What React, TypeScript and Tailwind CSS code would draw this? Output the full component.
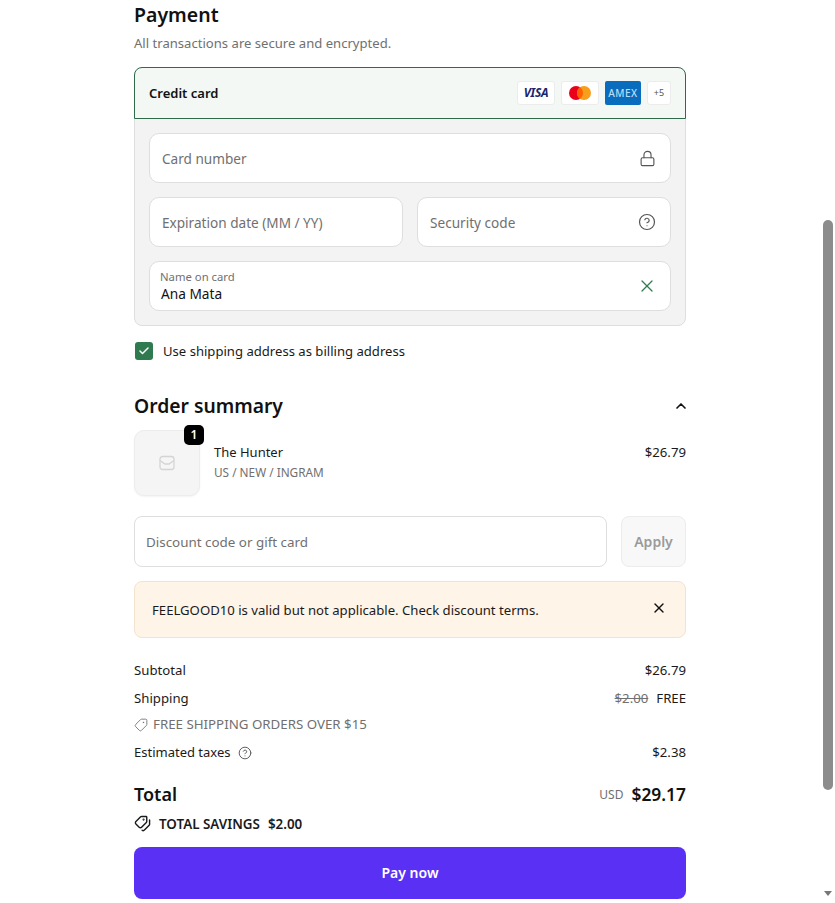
import { ChevronUp, CircleHelp, Lock, Tag, Tags, X, Check } from "lucide-react";

const font = { fontFamily: '"Noto Sans", "Open Sans", sans-serif' };

const Field = ({ label, icon, className = "" }: { label: string; icon?: React.ReactNode; className?: string }) => (
  <div className={`flex h-[50px] items-center justify-between rounded-[10px] border border-[#dedede] bg-white pr-[14px] pl-3 ${className}`}>
    <span className="pt-[2px] text-[13.6px] text-[#707070]">{label}</span>
    {icon}
  </div>
);

const CardBadge = ({ children, className = "" }: { children: React.ReactNode; className?: string }) => (
  <div className={`flex h-6 items-center justify-center rounded-[3px] border border-[#ececec] bg-white ${className}`}>
    {children}
  </div>
);

const Row = ({ left, right, className = "" }: { left: React.ReactNode; right: React.ReactNode; className?: string }) => (
  <div className={`flex items-center justify-between text-[13.2px] text-[#1a1a1a] ${className}`}>
    <div className="flex items-center">{left}</div>
    <div className="flex items-center">{right}</div>
  </div>
);

export default function App() {
  return (
    <div className="flex h-[903px] w-[835px] overflow-hidden bg-white" style={font}>
      <main className="w-[818px] shrink-0 pl-[134px]">
        <div className="w-[552px] pt-px">
          <h2 className="h-7 text-[19.5px] leading-7 font-semibold text-[#111]">Payment</h2>
          <p className="mt-[4px] h-5 text-[13.1px] leading-5 text-[#707070]">All transactions are secure and encrypted.</p>

          <div className="mt-[14px] rounded-[8px] border border-[#dedede] bg-[#f3f3f3]">
            <div className="-m-px flex h-[52px] items-center justify-between rounded-t-[8px] border border-[#2f6b4a] bg-[#f3f8f4] pr-[14px] pl-[14px]">
              <span className="pt-[2px] text-[13px] font-semibold text-[#111]">Credit card</span>
              <div className="flex items-center gap-[6px]">
                <CardBadge className="w-[38px]">
                  <span className="text-xs font-bold tracking-tight text-[#1a2470] italic">VISA</span>
                </CardBadge>
                <CardBadge className="w-[38px]">
                  <svg width="24" height="16" viewBox="0 0 24 16">
                    <circle cx="8" cy="8" r="7" fill="#eb001b" />
                    <circle cx="16" cy="8" r="7" fill="#f79e1b" />
                    <path d="M12 2.3a7 7 0 0 1 0 11.4a7 7 0 0 1 0-11.4z" fill="#ff5f00" />
                  </svg>
                </CardBadge>
                <div className="flex h-6 w-9 items-center justify-center rounded-[2px] bg-[#0a6cbd]">
                  <span className="text-[10px] leading-none font-medium tracking-[0.5px] text-[#bcdcf5]">AMEX</span>
                </div>
                <CardBadge className="w-6">
                  <span className="text-[9px] text-[#555]">+5</span>
                </CardBadge>
              </div>
            </div>

            <div className="flex flex-col gap-[14px] px-[14px] pt-[15px] pb-[14px]">
              <Field label="Card number" icon={<Lock size={17} strokeWidth={1.6} className="text-[#555]" />} />
              <div className="flex gap-[14px]">
                <Field label="Expiration date (MM / YY)" className="flex-1" />
                <Field label="Security code" className="flex-1" icon={<CircleHelp size={18} strokeWidth={1.6} className="text-[#555]" />} />
              </div>
              <div className="flex h-[50px] items-center justify-between rounded-[10px] border border-[#dedede] bg-white pr-[13px] pl-[10px]">
                <div className="flex flex-col pt-px">
                  <span className="text-[11.3px] leading-[15px] text-[#707070]">Name on card</span>
                  <span className="pl-px text-[13.7px] leading-[20px] text-[#111]">Ana Mata</span>
                </div>
                <X size={20} strokeWidth={1.5} className="text-[#2f7a4f]" />
              </div>
            </div>
          </div>

          <label className="mt-[14px] flex items-center">
            <span className="ml-px flex h-[18px] w-[18px] items-center justify-center rounded-[3px] bg-[#2f7a4f]">
              <Check size={12} strokeWidth={3} className="text-white" />
            </span>
            <span className="ml-[10px] pt-[2px] text-[13.1px] text-[#1a1a1a]">Use shipping address as billing address</span>
          </label>

          <div className="mt-[30px] flex h-7 items-center justify-between">
            <h2 className="text-[19.3px] leading-7 font-semibold text-[#111]">Order summary</h2>
            <ChevronUp size={16} strokeWidth={2.5} className="mr-[-3px] text-[#111]" />
          </div>

          <div className="mt-[10px] flex items-start">
            <div className="relative flex h-[66px] w-[66px] shrink-0 items-center justify-center rounded-[10px] border border-[#ededed] bg-[#f5f5f5] shadow-xs">
              <svg width="18" height="18" viewBox="0 0 18 18" fill="none" stroke="#d4d4d4" strokeWidth="1.3">
                <rect x="2" y="2.5" width="14" height="13" rx="2.5" />
                <path d="M2 6.5l5 3.5h4l5-3.5" />
              </svg>
              <span className="absolute -top-[6px] -right-[5px] flex h-5 w-5 items-center justify-center rounded-[5px] bg-black text-xs font-semibold text-white">1</span>
            </div>
            <div className="ml-[14px] pt-3">
              <div className="text-[13px] leading-5 text-[#1a1a1a]">The Hunter</div>
              <div className="text-[11.8px] leading-5 text-[#707070]">US / NEW / INGRAM</div>
            </div>
            <div className="ml-auto pt-3 text-[13.2px] leading-5 text-[#1a1a1a]">$26.79</div>
          </div>

          <div className="mt-5 flex gap-[14px]">
            <div className="flex h-[51px] flex-1 items-center rounded-[8px] border border-[#dedede] bg-white pl-[11px]">
              <span className="pt-[2px] text-[13.4px] text-[#707070]">Discount code or gift card</span>
            </div>
            <button className="h-[51px] w-[65px] rounded-[8px] border border-[#ececec] bg-[#f8f8f8] pt-[2px] text-sm font-semibold text-[#9a9a9a]">Apply</button>
          </div>

          <div className="mt-[14px] flex h-[57px] items-center justify-between rounded-[8px] border border-[#f2e3cf] bg-[#fff4e8] pr-[18px] pl-[17px]">
            <span className="pt-1 text-[13.15px] text-[#1a1a1a]">FEELGOOD10 is valid but not applicable. Check discount terms.</span>
            <X size={16} strokeWidth={2} className="mb-[2px] text-[#111]" />
          </div>

          <Row className="mt-[23px] h-5" left="Subtotal" right="$26.79" />
          <Row
            className="mt-2 h-5"
            left="Shipping"
            right={
              <>
                <span className="mr-2 text-[#707070] line-through">$2.00</span>
                FREE
              </>
            }
          />
          <div className="mt-[6px] flex h-5 items-center text-[13.3px] text-[#707070]">
            <Tag size={14} strokeWidth={1.5} className="mr-[5px] -scale-x-100" />
            FREE SHIPPING ORDERS OVER $15
          </div>
          <Row
            className="mt-2 h-5"
            left={
              <>
                <span className="text-[13px]">Estimated taxes</span>
                <CircleHelp size={14} strokeWidth={1.6} className="ml-[7px] text-[#555]" />
              </>
            }
            right="$2.38"
          />

          <div className="mt-[17px] flex h-7 items-center justify-between">
            <span className="text-lg font-semibold text-[#111]">Total</span>
            <div className="flex items-center">
              <span className="mt-[3px] mr-2 text-xs text-[#707070]">USD</span>
              <span className="text-[17.4px] font-semibold text-[#111]">$29.17</span>
            </div>
          </div>
          <div className="mt-[6px] flex h-5 items-center text-[13.4px] font-semibold text-[#1a1a1a]">
            <Tags size={17} strokeWidth={2} className="mr-2 -scale-x-100" />
            TOTAL SAVINGS<span className="ml-2">$2.00</span>
          </div>

          <button className="mt-[13px] h-[52px] w-full rounded-[8px] bg-[#5a31f4] text-sm font-semibold text-white">Pay now</button>
        </div>
      </main>

      <aside className="flex w-[17px] shrink-0 flex-col items-center bg-white pl-[2px]">
        <div className="mt-[220px] h-[570px] w-[10px] rounded-full bg-[#8c8c8c]" />
        <div className="mt-[101px] h-0 w-0 border-x-[4px] border-t-[5px] border-x-transparent border-t-[#777]" />
      </aside>
    </div>
  );
}
